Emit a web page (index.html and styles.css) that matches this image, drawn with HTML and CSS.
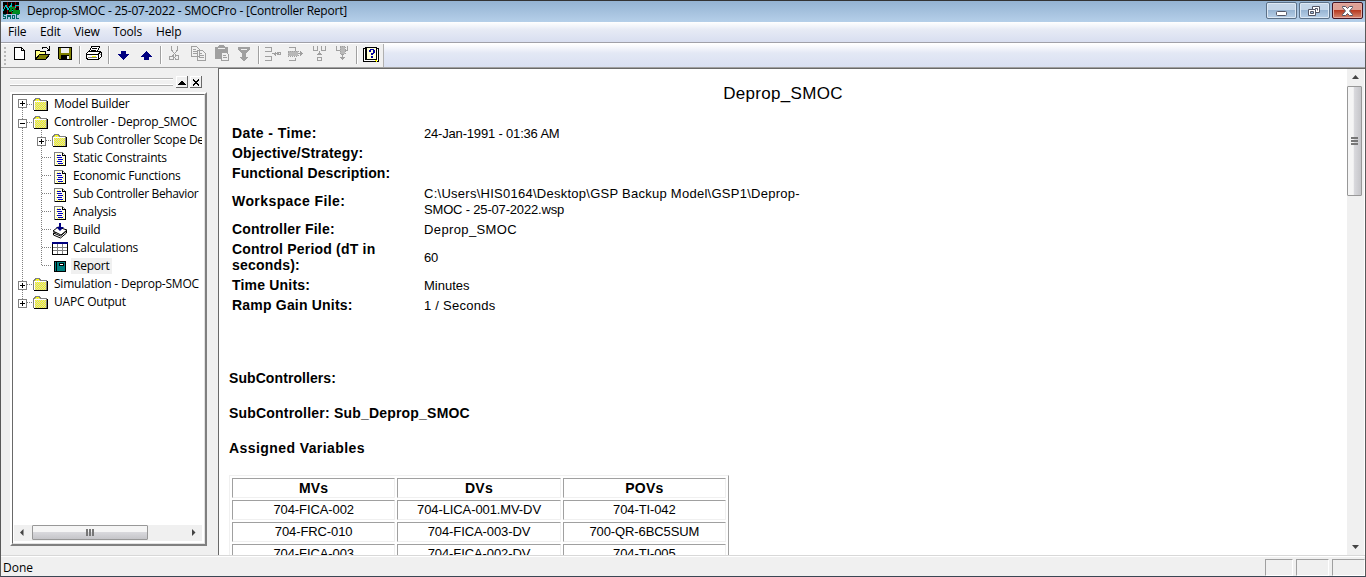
FILE: index.html
```html
<!DOCTYPE html>
<html lang="en">
<head>
<meta charset="utf-8">
<title>SMOCPro</title>
<link rel="stylesheet" href="styles.css">
</head>
<body>
<svg class="defs" width="0" height="0">
  <defs>
    <symbol id="folder" viewBox="0 0 16 14"><path d="M1 12V2l1-1h5l1 2h6v9z" fill="#ffff00"/><path d="M3 2.500h5M3 4.500h11M3 6.500h11M3 8.500h11M3 10.500h11" stroke="#d0d0d0" stroke-dasharray="1 1"/><path d="M2 5.500h12M2 7.500h12M2 9.500h12M2 11.500h12" stroke="#d0d0d0" stroke-dasharray="1 1"/><path d="M.5 12V2.500h1v-1h1v-1h4v1h1v1h6V12" fill="none" stroke="#808080"/><path d="M1.500 12V3.500H13" fill="none" stroke="#fff"/><path d="M1 12.500h14M14.500 3v10" stroke="#000"/></symbol>
    <symbol id="doc" viewBox="0 0 16 14"><path d="M2.500.5h8l3 3v10h-11z" fill="#fffff0"/><path d="M5 2.500h4M5 12.500h7M4.500 3v9M11.500 6v7" stroke="#ffff60" stroke-dasharray="1 1"/><path d="M2.500 13.500V.5h8l3 3" fill="none" stroke="#808080"/><path d="M10.500.5v3h3M2.500 13.500h11v-10" fill="none" stroke="#000"/><path d="M5 3.500h4M5 5.500h5M6 7.500h5M5 9.500h5M6 11.500h5" stroke="#0000c0"/></symbol>
  </defs>
</svg>
<div class="window">
  <header class="titlebar">
    <svg class="app-icon" width="17" height="17" shape-rendering="crispEdges"><path fill="#000" d="M0 0h16v12H0z"/><path d="M4.500 0v12M8.500 0v12M12.500 0v12M0 4.500h16" stroke="#800000" /><path d="M0 9l3-6 2 5 3-5v5h3l2-5h3" fill="none" stroke="#00c0c0"/><path d="M6 9h2V6h3v3h5v2H9" fill="none" stroke="#008a20" stroke-width="2"/><path d="M3 12.500H.5v2h2v2H0M4.500 17v-4h1v1h1v-1h1v4M9.500 13h2v3h-2zM16 12.500h-2.500v4H16" fill="none" stroke="#006868"/></svg>
    <span class="title">Deprop-SMOC - 25-07-2022 - SMOCPro - [Controller Report]</span>
    <div class="win-buttons">
      <span class="win-btn"><svg width="29" height="14"><rect x="9.500" y="8.500" width="10" height="4" rx="1" fill="#fff" stroke="#535666"/></svg></span>
      <span class="win-btn"><svg width="29" height="14"><path d="M12.500 3.500h7v6h-7z" fill="#fff" stroke="#535666"/><path d="M15 5.500h2.500v2" fill="none" stroke="#535666"/><path d="M8.500 6.500h7v6h-7z" fill="#fff" stroke="#535666"/><path d="M10.500 8.500h3v2h-3z" fill="#9ebbda" stroke="#535666"/></svg></span>
      <span class="win-btn close"><svg width="29" height="14"><path d="M9.500 3.500h3l2 2 2-2h3v1l-3 3.500 3 3.500v1h-3l-2-2-2 2h-3v-1l3-3.500-3-3.500z" fill="#fff" stroke="#535666"/></svg></span>
    </div>
  </header>
  <nav class="menubar"><span class="m-file">File</span><span class="m-edit">Edit</span><span class="m-view">View</span><span class="m-tools">Tools</span><span class="m-help">Help</span></nav>
  <div class="toolbar">
    <svg width="384" height="24" viewBox="1 1 384 24" shape-rendering="crispEdges">
      <path d="M4.500 4v18" stroke="#b8b8b8" stroke-width="2" stroke-dasharray="2 2"/>
      <path d="M79.500 3v18M108.500 3v18M160.500 3v18M258.500 3v18M356.500 3v18" stroke="#a0a0a0"/>
      <path d="M80.500 3v18M109.500 3v18M161.500 3v18M259.500 3v18M357.500 3v18" stroke="#fff"/>
      <path d="M14.500 4.500h7l3 3v9h-10z" fill="#fff" stroke="#000"/><path d="M21.500 4.500v3h3" fill="none" stroke="#000"/>
      <path d="M35.500 16.500v-9h4l1 1h5v3" fill="#ffff80" stroke="#000"/><path d="M35.500 16.500l4-5h10l-4 5z" fill="#808000" stroke="#000"/><path d="M42 5.500l1-1h3l3 2M49.500 3v4h-3" fill="none" stroke="#000"/>
      <path d="M58.500 4.500h13v12h-12l-1-1z" fill="#808000" stroke="#000"/><path d="M61 5h8v5h-8z" fill="#f0f0f0"/><path d="M61 12h8v5h-8z" fill="#000"/><path d="M67 13h2v3h-2z" fill="#f0f0f0"/>
      <g transform="translate(-1 -1)"><path d="M90.500 9.500l2-5h8l-2 5z" fill="#fff" stroke="#000"/><path d="M87.500 11.500l2-2h11l2 1v4l-3 3h-11l-1-2z" fill="#fff" stroke="#000"/><path d="M87 12.500h12v4M99 12l3-2M93 6.500h5M92 8.500h5" fill="none" stroke="#000"/><path d="M89 15.500h9M101 12.500h1" stroke="#808080"/><path d="M93 14h4v1h-4z" fill="#ffff00"/></g>
      <path d="M121 8h5v3h4l-6.500 6-6.500-6h4zM144 17h5v-3h4l-6.500-6-6.500 6h4z" fill="#000080"/>
      <g transform="translate(0 -1)">
      <g fill="none" stroke="#a0a0a0"><path d="M171.500 4v4l5 6M177.500 4v4l-5 6"/><circle cx="171.500" cy="16" r="2"/><circle cx="177" cy="15.500" r="2"/>
      <path d="M191.500 4.500h5l3 3v7h-8zM197.500 8.500h5l3 3v7h-8z" fill="#f0f0f0"/><path d="M193 7.500h3M193 9.500h4M193 11.500h4M199 11.500h3M199 13.500h5M199 15.500h5"/></g>
      <path d="M215 5h3l1-2h5l1 2h3v12h-13z" fill="#a0a0a0"/><path d="M218 6.500h7" stroke="#f0f0f0"/><path d="M221.500 10.500h5l2 2v6h-7z" fill="#f0f0f0" stroke="#a0a0a0"/><path d="M223 13.500h3M223 15.500h4" stroke="#a0a0a0"/>
      <path d="M238 5h12v2l-4 5v3h3l-5 4-5-4h3v-3l-4-5z" fill="#a0a0a0"/><path d="M241 7h6" stroke="#f0f0f0"/>
      <g fill="none" stroke="#a0a0a0"><path d="M265 5.500h6v4h-6M265 18.500h6v-4h-6M272 11.500h7M275 9.500v4M274 10.500v2M277.500 10.500h3v2h-3z"/><path d="M289 5.500h6v3M289 18.500h6v-3M298 11.500h5M300.500 9v5M301.500 10v3"/><path d="M313.500 4v4h4v-4M321.500 4v4h4v-4M319.500 9v4M317 12.500h5M318 11.500h3M317.500 15.500h4v3h-4z"/><path d="M336.500 4v4h4M347.500 4v4h-4M342.500 12v6M340 15.500h5M341 16.500h3"/></g>
      <path d="M288 9h10v5h-10zM340 4h5v8h-5z" fill="#b8b8b8" stroke="#a0a0a0" stroke-dasharray="1 1"/>
      </g>
      <path d="M363.500 5.500h15v13h-15z" fill="#fff" stroke="#000"/><path d="M365.500 4v13" stroke="#000" stroke-width="2"/><path d="M366.500 4.500h10v12h-10z" fill="#ffffd8" stroke="#000"/><path d="M369 7h2v2h-2zM370 6h4v1h-4zM373 7h2v3h-2zM371 10h3v1h-3zM371 11h2v1h-2zM371 13h2v2h-2z" fill="#0000a0"/><path d="M374 17h3v2z" fill="#ff0"/>
      <path d="M383.500 0v25" stroke="#b0b0b0"/>
    </svg>
  </div>
  <main class="workspace">
    <aside class="dock">
      <div class="grip"><i class="lines"></i>
        <svg width="26" height="12" shape-rendering="crispEdges"><path d="M0 0h12v12H0zM14 0h12v12H14z" fill="#f0f0f0"/><path d="M.5 12V.5H12M14.500 12V.5H26" fill="none" stroke="#fff"/><path d="M0 11.500h11.500V0M14 11.500h11.500V0" fill="none" stroke="#696969"/><path d="M2 9h8L6 4z"/><path d="M17 4l6 5M23 4l-6 5" stroke="#000" stroke-width="1.500"/></svg>
      </div>
      <div class="tree-frame"><div class="tree">
        <div class="tree-view">
        <svg class="branches" width="60" height="215" shape-rendering="crispEdges">
          <path d="M8.500 9v196M9 9h10M9 27h10M9 189h10M9 207h10M27.500 33v138M28 45h10M28 62h10M28 80h10M28 98h10M28 116h10M28 134h10M28 152h10M28 170h10" fill="none" stroke="#808080" stroke-dasharray="1 1"/>
          <g fill="#fff" stroke="#808080"><path d="M4.500 4.500h8v8h-8zM4.500 24.500h8v8h-8zM23.500 42.500h8v8h-8zM4.500 186.500h8v8h-8zM4.500 204.500h8v8h-8z"/></g>
          <path d="M6 8.500h5M8.500 6v5M6 28.500h5M25 46.500h5M27.500 44v5M6 190.500h5M8.500 188v5M6 208.500h5M8.500 206v5" stroke="#000"/>
        </svg>
        <ul>
          <li><svg class="ic folder"><use href="#folder"/></svg><span>Model Builder</span></li>
          <li><svg class="ic folder"><use href="#folder"/></svg><span>Controller - Deprop_SMOC</span></li>
          <li class="sub"><svg class="ic folder"><use href="#folder"/></svg><span>Sub Controller Scope De</span></li>
          <li class="sub"><svg class="ic doc"><use href="#doc"/></svg><span>Static Constraints</span></li>
          <li class="sub"><svg class="ic doc"><use href="#doc"/></svg><span>Economic Functions</span></li>
          <li class="sub"><svg class="ic doc"><use href="#doc"/></svg><span class="narrow">Sub Controller Behavior</span></li>
          <li class="sub"><svg class="ic doc"><use href="#doc"/></svg><span>Analysis</span></li>
          <li class="sub"><svg class="ic smooth" viewBox="0 0 16 16"><path d="M1.500 10v2l7 3 6-5V8z" fill="#fff" stroke="#000"/><path d="M1.500 10l7 3 6-5" fill="none" stroke="#000"/><path d="M1 8l5-4 9 3-6 5z" fill="#fff" stroke="#000"/><path d="M7 0h2v4h3L8 8 4 4h3z" fill="#000080"/></svg><span>Build</span></li>
          <li class="sub"><svg class="ic" viewBox="0 0 16 16"><path d="M.5 1.500h15v12H.5z" fill="#fff" stroke="#000"/><path d="M0 1h16v2H0z" fill="#000080"/><path d="M1 6.500h14M1 9.500h14M5.500 3v10M10.500 3v10" stroke="#808080"/></svg><span>Calculations</span></li>
          <li class="sub"><svg class="ic" viewBox="0 0 16 16"><path d="M2.500 2.500h11v10h-11z" fill="#008080" stroke="#000"/><path d="M4.500 2v11" stroke="#000"/><path d="M7.500 4.500h4v2h-4z" fill="#fff" stroke="#000"/></svg><span class="selected">Report</span></li>
          <li><svg class="ic folder"><use href="#folder"/></svg><span>Simulation - Deprop-SMOC</span></li>
          <li><svg class="ic folder"><use href="#folder"/></svg><span>UAPC Output</span></li>
        </ul>
        </div>
        <div class="hscroll"><svg width="16" height="16"><path d="M9.500 4v7L6 7.500z" fill="#444"/></svg><div class="thumb"><i></i><i></i><i></i></div><svg width="16" height="16"><path d="M6 4v7l3.500-3.500z" fill="#444"/></svg></div>
      </div></div>
    </aside>
    <section class="report">
      <div class="page">
        <h1>Deprop_SMOC</h1>
        <dl>
          <dt class="loose">Date - Time:</dt><dd class="tight">24-Jan-1991 - 01:36 AM</dd>
          <dt>Objective/Strategy:</dt><dd></dd>
          <dt class="snug">Functional Description:</dt><dd></dd>
          <dt class="loose">Workspace File:</dt><dd>C:\Users\HIS0164\Desktop\GSP Backup Model\GSP1\Deprop-<br><span class="tight">SMOC - 25-07-2022.wsp</span></dd>
          <dt>Controller File:</dt><dd class="name">Deprop_SMOC</dd>
          <dt>Control Period (dT in<br>seconds):</dt><dd class="tight">60</dd>
          <dt>Time Units:</dt><dd class="plain">Minutes</dd>
          <dt>Ramp Gain Units:</dt><dd>1 / Seconds</dd>
        </dl>
        <h2 class="snug">SubControllers:</h2>
        <h2>SubController: Sub_Deprop_SMOC</h2>
        <h2 class="loose">Assigned Variables</h2>
        <table>
          <tr><th>MVs</th><th>DVs</th><th>POVs</th></tr>
          <tr><td>704-FICA-002</td><td>704-LICA-001.MV-DV</td><td>704-TI-042</td></tr>
          <tr><td>704-FRC-010</td><td>704-FICA-003-DV</td><td>700-QR-6BC5SUM</td></tr>
          <tr><td>704-FICA-003</td><td>704-FICA-002-DV</td><td>704-TI-005</td></tr>
        </table>
      </div>
      <div class="vscroll"><svg width="17" height="17"><path d="M5 10h7L8.500 6z" fill="#444"/></svg><div class="thumb"><i></i><i></i><i></i></div><svg class="down" width="17" height="17"><path d="M5 7h7l-3.500 4z" fill="#444"/></svg></div>
    </section>
  </main>
  <footer class="status"><span class="done">Done</span><i class="cell c1"></i><i class="cell c2"></i><i class="cell c3"></i></footer>
</div>
</body>
</html>
```

FILE: styles.css
```css
* { box-sizing: border-box; }
body { margin: 0; overflow: hidden; background: #f0f0f0; color: #000; font: 12px "Open Sans", "Noto Sans", sans-serif; }
ul, dl, dd, h1, h2 { margin: 0; padding: 0; }
svg { display: block; flex: none; }
.defs { position: absolute; }
.window { width: 1366px; height: 577px; display: flex; flex-direction: column; border: 1px solid #5a5a5a; border-top-color: #333; border-bottom-color: #3b4654; background: #f0f0f0; }
.titlebar { height: 21px; flex: none; display: flex; align-items: flex-start; padding: 1px 2px 0; background: linear-gradient(#94b3d2, #b5cfe9); }
.app-icon { margin-right: 7px; }
.title { line-height: 17px; white-space: nowrap; letter-spacing: -.215px; }
.win-buttons { margin-left: auto; display: flex; gap: 2px; }
.win-btn { width: 31px; height: 17px; border: 1px solid #5c7188; border-radius: 2px; background: linear-gradient(#c3d5e8 48%, #98b5d3 50%, #b8d0e8); box-shadow: inset 0 0 0 1px #dce8f4; }
.win-btn.close { border-color: #431422; background: linear-gradient(#dda196 45%, #b83b22 50%, #d58770); box-shadow: inset 0 0 0 1px #e5aaa0; }
.menubar { height: 21px; flex: none; display: flex; padding-left: 7px; line-height: 19px; letter-spacing: -.15px; background: linear-gradient(#fff, #e6eaf5 40%, #d8def0); border-bottom: 1px solid #a0a0a8; }
.m-file { width: 32px; } .m-edit { width: 34px; } .m-view { width: 39px; } .m-tools { width: 43px; }
.toolbar { height: 24px; flex: none; border-top: 1px solid #fff; background: linear-gradient(90deg, #f0f0f0 383px, transparent 383px), linear-gradient(#fff, #e3e8f5 40%, #d9e0f2); }
.workspace { flex: 1; min-height: 0; display: flex; border-top: 1px solid #a0a0a0; border-bottom: 1px solid #d8d8d8; }
.dock { width: 217px; flex: none; padding: 8px 12px 9px 9px; display: flex; flex-direction: column; }
.grip { height: 16px; display: flex; gap: 3px; }
.lines { width: 163px; height: 8px; margin: 2px 0 0; border: solid #b0b0b0; border-width: 1px 0; box-shadow: inset 0 1px #fff, inset 0 -1px #fff; }
.tree-frame { flex: 1; min-height: 0; margin-right: -1px; border: 2px solid #fff; border-right-color: #808080; border-bottom-color: #808080; }
.tree { height: 100%; border: 1px solid #696969; border-right-color: #e3e3e3; border-bottom-color: #e3e3e3; background: #fff; display: flex; flex-direction: column; overflow: hidden; padding: 0 2px 2px 1px; }
.tree-view { flex: 1; display: grid; overflow: hidden; }
.branches, .tree ul { grid-area: 1 / 1; }
.tree ul { list-style: none; position: relative; }
.tree li { height: 18px; display: flex; align-items: center; gap: 3px; padding-left: 19px; line-height: 16px; letter-spacing: -.22px; white-space: nowrap; }
.tree li.sub { padding-left: 38px; }
.tree li span { padding: 0 2px; }
.tree li .selected { background: #f0f0f0; }
.tree li .narrow { letter-spacing: -.35px; }
.ic { width: 16px; height: 16px; margin-top: 2px; shape-rendering: crispEdges; }
.smooth { shape-rendering: auto; }
.folder, .doc { height: 14px; }
.hscroll { height: 16px; flex: none; display: flex; background: #f0f0f0; }
.thumb { display: flex; flex: none; align-items: center; justify-content: center; gap: 1px; border: 1px solid #989898; border-radius: 1px; }
.thumb i { background: #777; }
.hscroll .thumb { width: 116px; margin: 0 auto 0 2px; height: 15px; background: linear-gradient(#f5f5f5 45%, #d8d8dc 50%, #c5c5c9); }
.hscroll i { width: 2px; height: 7px; }
.report { flex: 1; min-width: 0; display: flex; background: #fff; border: solid #696969; border-width: 1px 0 0 1px; font-family: "Liberation Sans", sans-serif; font-size: 13px; line-height: 16px; }
.page { flex: 1; padding: 15px 10px 0; overflow: hidden; }
h1 { font-size: 17px; font-weight: 400; line-height: 20px; letter-spacing: .3px; text-align: center; margin-bottom: 22px; }
dl { display: grid; grid-template-columns: 192px 1fr; row-gap: 4px; padding-left: 3px; align-items: center; margin-bottom: 56px; }
dt, h2, th { font-weight: 700; font-size: 14px; letter-spacing: .2px; }
dt { margin: -1px 0 1px; }
dd { letter-spacing: .26px; }
.tight { letter-spacing: -.18px; }
.name { letter-spacing: .38px; }
.plain { letter-spacing: 0; }
.snug { letter-spacing: .08px; }
.loose { letter-spacing: .42px; }
h2 { height: 16px; margin-bottom: 19px; }
table { width: 500px; table-layout: fixed; border: 1px solid; border-color: #f0f0f0 #a0a0a0 #a0a0a0 #f0f0f0; border-spacing: 2px; }
td, th { height: 20px; padding: 1px; border: 1px solid; border-color: #a0a0a0 #f0f0f0 #f0f0f0 #a0a0a0; text-align: center; }
td { letter-spacing: -.1px; }
.vscroll { width: 18px; display: flex; flex-direction: column; background: #f0f0f0; border-right: 1px solid #fff; }
.vscroll .thumb { flex-direction: column; height: 110px; width: 15px; background: linear-gradient(90deg, #f5f5f5 40%, #d8d8dc 50%, #c5c5c9); }
.vscroll i { width: 7px; height: 2px; }
.down { margin-top: auto; }
.status { height: 20px; flex: none; display: flex; border-top: 1px solid #fff; padding: 2px 0 0 2px; gap: 3px; line-height: 18px; }
.done { flex: 1; }
.cell { width: 28px; border: 1px solid; border-color: #a0a0a0 #fff #fff #a0a0a0; }
.c2, .c3 { width: 33px; }
```
